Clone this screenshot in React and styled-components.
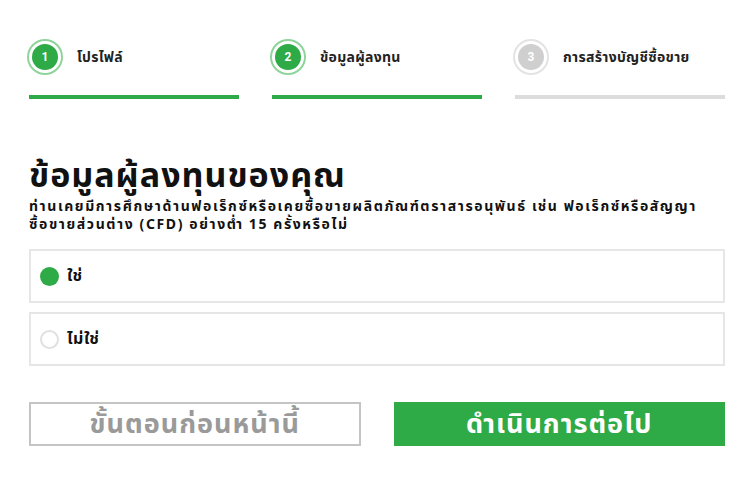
import React, { useState } from "react";
import styled, { createGlobalStyle } from "styled-components";

const GREEN = "#2eaa46";

const GlobalStyle = createGlobalStyle`
  html, body {
    margin: 0;
    padding: 0;
    background: #fff;
  }
  body {
    font-family: "Noto Sans", "Noto Sans Thai", sans-serif;
    color: #111;
  }
`;

const Page = styled.div`
  width: 696px;
  padding: 39px 25px 0 29px;
`;

const Steps = styled.div`
  display: grid;
  grid-template-columns: repeat(3, 210px);
  column-gap: 33px;
`;

const Step = styled.div`
  display: flex;
  flex-direction: column;
`;

const StepHead = styled.div`
  display: flex;
  align-items: center;
  gap: 19px;
  height: 36px;
`;

const Circle = styled.div`
  width: 26px;
  height: 26px;
  flex: none;
  border-radius: 50%;
  background: ${({ $active }) => ($active ? GREEN : "#cfcfcf")};
  box-shadow: 0 0 0 3px #fff, 0 0 0 5px ${({ $active }) => ($active ? "#8fd49b" : "#e3e3e3")};
  margin-left: 3px;
  color: #fff;
  font-family: "Roboto", "Liberation Sans", sans-serif;
  font-size: 12px;
  font-weight: 700;
  display: flex;
  align-items: center;
  justify-content: center;
`;

const StepLabel = styled.span`
  font-size: 14px;
  font-weight: 700;
  letter-spacing: 0.3px;
  color: #222;
`;

const Bar = styled.div`
  height: 4px;
  margin-top: 20px;
  background: ${({ $active }) => ($active ? GREEN : "#dcdcdc")};
`;

const Heading = styled.h1`
  margin: 55px 0 0;
  font-size: 34px;
  font-weight: 700;
  line-height: 40px;
  letter-spacing: 1px;
  color: #111;
`;

const Question = styled.p`
  margin: 3px 0 16px;
  font-size: 14px;
  font-weight: 700;
  line-height: 18px;
  letter-spacing: 1.6px;
  color: #111;
`;

const Options = styled.div`
  display: flex;
  flex-direction: column;
  gap: 9px;
`;

const Option = styled.label`
  display: flex;
  align-items: center;
  gap: 8px;
  height: 54px;
  box-sizing: border-box;
  padding: 0 9px;
  border: 2px solid #e6e6e6;
  cursor: pointer;
  font-size: 16px;
  font-weight: 700;
  letter-spacing: 0.5px;
`;

const Dot = styled.span`
  width: 19px;
  height: 19px;
  box-sizing: border-box;
  border-radius: 50%;
  background: ${({ $checked }) => ($checked ? GREEN : "#fff")};
  border: ${({ $checked }) => ($checked ? "none" : "2px solid #e0e0e0")};
`;

const Actions = styled.div`
  display: grid;
  grid-template-columns: 1fr 1fr;
  column-gap: 33px;
  margin-top: 36px;
`;

const Button = styled.button`
  height: 44px;
  box-sizing: border-box;
  padding: 0;
  font-family: inherit;
  font-size: 27px;
  font-weight: 700;
  letter-spacing: 1px;
  cursor: pointer;
  border: ${({ $primary }) => ($primary ? "none" : "2px solid #c4c4c4")};
  background: ${({ $primary }) => ($primary ? GREEN : "#fff")};
  color: ${({ $primary }) => ($primary ? "#fff" : "#9a9a9a")};
`;

const steps = [
  { n: 1, label: "โปรไฟล์", active: true },
  { n: 2, label: "ข้อมูลผู้ลงทุน", active: true },
  { n: 3, label: "การสร้างบัญชีซื้อขาย", active: false },
];

export default function App() {
  const [answer, setAnswer] = useState("yes");

  return (
    <Page>
      <GlobalStyle />
      <Steps>
        {steps.map((s) => (
          <Step key={s.n}>
            <StepHead>
              <Circle $active={s.active}>{s.n}</Circle>
              <StepLabel>{s.label}</StepLabel>
            </StepHead>
            <Bar $active={s.active} />
          </Step>
        ))}
      </Steps>

      <Heading>ข้อมูลผู้ลงทุนของคุณ</Heading>
      <Question>
        ท่านเคยมีการศึกษาด้านฟอเร็กซ์หรือเคยซื้อขายผลิตภัณฑ์ตราสารอนุพันธ์ เช่น ฟอเร็กซ์หรือสัญญา
        <br />
        ซื้อขายส่วนต่าง (CFD) อย่างต่ำ 15 ครั้งหรือไม่
      </Question>

      <Options>
        <Option onClick={() => setAnswer("yes")}>
          <Dot $checked={answer === "yes"} />
          ใช่
        </Option>
        <Option onClick={() => setAnswer("no")}>
          <Dot $checked={answer === "no"} />
          ไม่ใช่
        </Option>
      </Options>

      <Actions>
        <Button>ขั้นตอนก่อนหน้านี้</Button>
        <Button $primary>ดำเนินการต่อไป</Button>
      </Actions>
    </Page>
  );
}
